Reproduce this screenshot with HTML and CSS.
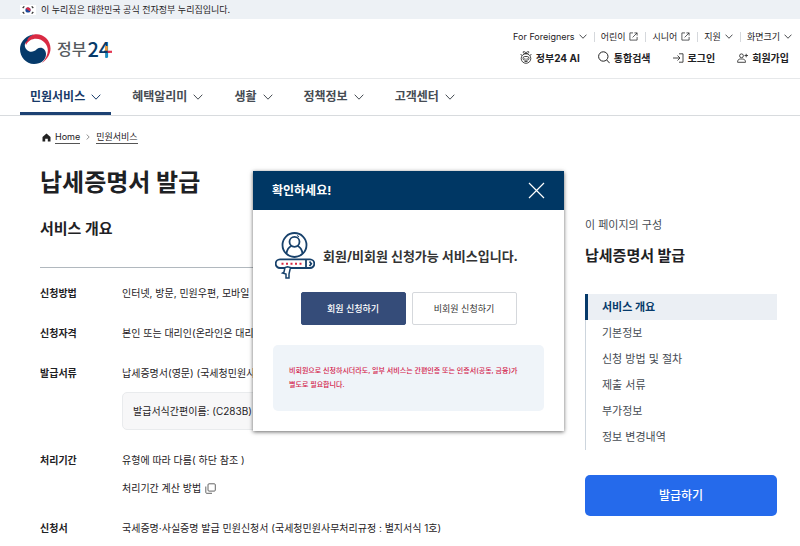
FILE: index.html
```
<!DOCTYPE html>
<html lang="ko">
  <head>
    <meta charset="utf-8" />
    <meta name="viewport" content="width=device-width" />
    <title>납세증명서 발급 | 정부24</title>
    <link rel="stylesheet" href="styles.css">
  </head>
  <body>
    <!-- shared icons -->
    <svg width="0" height="0" class="sprite" aria-hidden="true">
      <symbol id="chevron" viewBox="0 0 10 6">
        <path d="M.7.7 5 5.2 9.3.7" fill="none" stroke="currentColor" />
      </symbol>
      <symbol id="external" viewBox="0 0 10 10">
        <path d="M4.5 1H1v8h8V5.5M4 6l5-5M6 1h3v3" fill="none" stroke="currentColor" stroke-width=".8" />
      </symbol>
    </svg>

    <div class="banner">
      <svg class="flag" width="16" height="10" viewBox="0 0 16 10">
        <path fill="#fff" d="M0 0h16v10H0z" />
        <circle cx="8" cy="5" r="2.6" fill="#1b4a9c" />
        <path d="M5.6 4a2.6 2.6 0 0 1 4.9 1.7C9.700 6.500 8.600 5.700 8 5S6 4 5.600 4z" fill="#d92b45" />
        <path d="M2.700 3l1.600-1.600M11.700 1.400 13.300 3M2.700 7l1.600 1.600M11.700 8.600 13.300 7" stroke="#333" stroke-width="1.300" />
      </svg>
      <span>이 누리집은 대한민국 공식 전자정부 누리집입니다.</span>
    </div>

    <header class="header">
      <a href="#" class="logo">
        <svg width="31" height="30" viewBox="0 0 31 30">
          <path d="M5 8C9-1 20-2 26 4c7 7 6 18-4 25 6-7 8-14 3-20C20 3 10 3 6 11z" fill="#d92a43" />
          <path d="M12 .8C4 3 0 9 0 15c0 8 6 15 14 15 7 0 12-4 12-10 0-5-5-8-9-5-3 3-7 4-10 1C3 12 5 7 9 6 6 8 7 3 14 .6z" fill="#063a6a" />
        </svg>
        <span class="logo-name">정부</span><span class="logo-num">24
          <svg width="8" height="12" viewBox="0 0 8 12">
            <path d="M2.500 0v5" stroke="#f39a32" stroke-width="2.400" />
            <path d="M2.500 6.500V12" stroke="#1692c8" stroke-width="2.400" />
            <path d="M3.500 5.800H8" stroke="#e33652" stroke-width="2.200" />
            <path d="M0 5.800h3.500" stroke="#063a6a" stroke-width="2.200" />
          </svg>
        </span>
      </a>
      <div class="tools">
        <div class="util">
          <button>For Foreigners <svg width="8" height="5"><use href="#chevron" /></svg></button>
          <a href="#">어린이 <svg width="9" height="9"><use href="#external" /></svg></a>
          <a href="#">시니어 <svg width="9" height="9"><use href="#external" /></svg></a>
          <button>지원 <svg width="8" height="5"><use href="#chevron" /></svg></button>
          <button>화면크기 <svg width="8" height="5"><use href="#chevron" /></svg></button>
        </div>
        <div class="actions">
          <a href="#">
            <svg width="12" height="13" viewBox="0 0 12 13" fill="none" stroke="#333" stroke-width=".9">
              <circle cx="6" cy="7.500" r="4.800" />
              <rect x="3" y="5.500" width="6" height="3.600" rx="1.800" />
              <path d="M6 2.600C4 3 3 2 3.300.7 5 .5 6 1.200 6 2.600c0-1.400 1-2.100 2.700-1.900C9 2 8 3 6 2.600zM1.500 4.500.8 3M10.500 4.500l.7-1.500M4.800 7v.8M7.200 7v.8M4.500 10.500h3" />
            </svg>
            정부24 AI</a>
          <button>
            <svg width="12" height="13" viewBox="0 0 12 13" fill="none" stroke="#222">
              <circle cx="5.300" cy="5.500" r="4.700" />
              <path d="m8.700 9 3 3.200" />
            </svg>
            통합검색</button>
          <a href="#" class="wide">
            <svg width="11" height="10" viewBox="0 0 11 10" fill="none" stroke="#333" stroke-width=".9">
              <path d="M0 5h7M4.500 2.500 7 5 4.500 7.500M6 .8h4v8.400H6" />
            </svg>
            로그인</a>
          <a href="#" class="wide">
            <svg width="11" height="10" viewBox="0 0 11 10" fill="none" stroke="#333" stroke-width=".9">
              <circle cx="4.500" cy="2.800" r="1.900" />
              <path d="M.6 9.300C.6 5.700 3 6 4.500 6s4 0 4 3.300zM7.500 2.500h3.500M9.200.8v3.500" />
            </svg>
            회원가입</a>
        </div>
      </div>
    </header>

    <nav class="gnb">
      <button class="current">민원서비스 <svg width="10" height="6"><use href="#chevron" /></svg></button>
      <button>혜택알리미 <svg width="10" height="6"><use href="#chevron" /></svg></button>
      <button>생활 <svg width="10" height="6"><use href="#chevron" /></svg></button>
      <button>정책정보 <svg width="10" height="6"><use href="#chevron" /></svg></button>
      <button>고객센터 <svg width="10" height="6"><use href="#chevron" /></svg></button>
    </nav>

    <div class="container">
      <main>
        <div class="breadcrumb">
          <svg width="9" height="9" viewBox="0 0 9 9">
            <path d="M4.500.5.500 4v4.500h2.700V5.800h2.600v2.700h2.700V4z" fill="#222" />
          </svg>
          <a href="#">Home</a>
          <svg class="arrow" width="4" height="6" viewBox="0 0 4 6">
            <path d="m.6.5 2.600 2.500L.6 5.500" fill="none" stroke="#777" stroke-width=".8" />
          </svg>
          <a href="#">민원서비스</a>
        </div>
        <h1>납세증명서 발급</h1>
        <h2>서비스 개요</h2>
        <dl class="info">
          <dt>신청방법</dt>
          <dd>인터넷, 방문, 민원우편, 모바일</dd>
          <dt>신청자격</dt>
          <dd>본인 또는 대리인(온라인은 대리인 불가)</dd>
          <dt>발급서류</dt>
          <dd>
            납세증명서(영문) (국세청민원사무처리규정)
            <p class="form-name">발급서식간편이름: (C283B)</p>
          </dd>
          <dt>처리기간</dt>
          <dd>
            유형에 따라 다름( 하단 참조 )
            <a href="#" class="method">처리기간 계산 방법
              <svg width="11" height="11" viewBox="0 0 11 11" fill="none" stroke="#555" stroke-width=".9">
                <rect x="3" y=".8" width="7.300" height="7.300" rx="1" />
                <path d="M.8 3.500v6q0 .8.8.8H7" />
              </svg>
            </a>
          </dd>
          <dt>신청서</dt>
          <dd>국세증명·사실증명 발급 민원신청서 (국세청민원사무처리규정 : 별지서식 1호)</dd>
        </dl>
      </main>

      <aside class="side">
        <p>이 페이지의 구성</p>
        <h2>납세증명서 발급</h2>
        <ul>
          <li><a href="#" class="active">서비스 개요</a></li>
          <li><a href="#">기본정보</a></li>
          <li><a href="#">신청 방법 및 절차</a></li>
          <li><a href="#">제출 서류</a></li>
          <li><a href="#">부가정보</a></li>
          <li><a href="#">정보 변경내역</a></li>
        </ul>
        <button class="issue">발급하기</button>
      </aside>
    </div>

    <dialog open class="modal" aria-labelledby="modal-title">
      <div class="modal-head">
        <h2 id="modal-title">확인하세요!</h2>
        <button class="close" aria-label="닫기">
          <svg width="17" height="17" viewBox="0 0 17 17">
            <path d="m1 1 15 15M16 1 1 16" stroke="#fff" stroke-width="1.200" />
          </svg>
        </button>
      </div>
      <div class="modal-body">
        <div class="message">
          <svg width="40" height="47" viewBox="0 0 40 47" fill="none" stroke="#17416b" stroke-width="1.800">
            <circle cx="19.500" cy="13" r="12" />
            <circle cx="19.500" cy="9.800" r="5" />
            <path d="M11.500 21.500c.5-4 2.500-6.500 5-7.500M27.500 21.500c-.5-4-2.500-6.500-5-7.500" />
            <path d="M22 3.500l2 1.200" stroke-width="1" />
            <path d="M10 36H5a4.300 4.300 0 0 1 0-8.600h30a4.300 4.300 0 0 1 0 8.600H16M31 27.500V36M34.500 29.500l1.800 2.200-1.800 2.300" />
            <path d="M6.500 31.700h20" stroke="#d92a43" stroke-width="2" stroke-dasharray="2 2.500" />
            <path d="M10 35.500 9 40l-1.500 1 3.500 1v4h3v-4l1.500-6.500-3-.8z" stroke-width="1.500" />
          </svg>
          <strong>회원/비회원 신청가능 서비스입니다.</strong>
        </div>
        <div class="buttons">
          <button class="member">회원 신청하기</button>
          <button>비회원 신청하기</button>
        </div>
        <p class="notice">비회원으로 신청하시더라도, 일부 서비스는 간편인증 또는 인증서(공동, 금융)가 별도로 필요합니다.</p>
      </div>
    </dialog>
  </body>
</html>
```
FILE: styles.css
```
* {
  box-sizing: border-box;
}

body {
  margin: 0;
  background: #fff;
  color: #1e2124;
  font-family: Inter, "Noto Sans CJK KR", sans-serif;
  font-size: 11px;
  line-height: 20px;
}

h1, h2, p, ul, dl, dd {
  margin: 0;
  padding: 0;
}

a {
  color: inherit;
  text-decoration: none;
}

button {
  padding: 0;
  border: 0;
  background: none;
  color: inherit;
  font: inherit;
  cursor: pointer;
}

svg {
  flex: none;
}

.sprite {
  position: absolute;
}

/* top */
.banner {
  display: flex;
  align-items: center;
  gap: 5px;
  height: 19px;
  padding: 0 20px;
  background: #edf1f5;
  font-size: 9px;
}

.header {
  display: flex;
  justify-content: space-between;
  align-items: center;
  height: 60px;
  padding: 0 8px 0 20px;
  border-bottom: 1px solid #e6e8ea;
}

.logo {
  display: flex;
  align-items: center;
}

.logo-name {
  margin-left: 6px;
  color: #555a60;
  font-size: 16px;
  font-weight: 500;
}

.logo-num {
  position: relative;
  margin-left: 1px;
  color: #063a6a;
  font-family: "Noto Sans CJK KR", sans-serif;
  font-size: 20px;
  font-weight: 500;
}

.logo-num svg {
  position: absolute;
  right: -2px;
  top: 7px;
}

.tools {
  display: flex;
  flex-direction: column;
  align-items: flex-end;
  gap: 6px;
  padding-top: 2px;
}

.util,
.actions {
  display: flex;
  align-items: center;
}

.util {
  font-size: 9px;
  line-height: 10px;
}

.util > * {
  display: flex;
  align-items: center;
  gap: 4px;
  padding: 0 7px 0 6px;
  border-left: 1px solid #d5d8dc;
}

.util > :first-child {
  border-left: 0;
}

.util > :last-child {
  padding-right: 0;
}

.actions {
  gap: 18px;
  margin-right: 3px;
  font-size: 10px;
  font-weight: 700;
}

.actions > * {
  display: flex;
  align-items: center;
  gap: 4px;
}

.actions .wide {
  margin-left: 4px;
}

.gnb {
  display: flex;
  gap: 11px;
  height: 37px;
  padding: 0 20px;
  border-bottom: 1px solid #d8dbde;
  color: #464c53;
  font-size: 12px;
  font-weight: 700;
}

.gnb button {
  display: flex;
  align-items: center;
  gap: 6px;
  padding: 0 10px;
  border-bottom: 3px solid transparent;
  border-top: 3px solid transparent;
}

.gnb .current {
  border-bottom-color: #1d4273;
  color: #173a69;
}

/* content */
.container {
  display: grid;
  grid-template-columns: 1fr 192px;
  gap: 36px;
  padding: 13px 23px 8px 40px;
}

.breadcrumb {
  display: flex;
  align-items: center;
  gap: 4px;
  height: 16px;
  padding-left: 2px;
  font-size: 9px;
  line-height: 12px;
}

.breadcrumb a {
  border-bottom: 1px solid #555;
}

.breadcrumb .arrow {
  margin: 0 2px;
}

h1 {
  margin-top: 20px;
  font-size: 24px;
  line-height: 36px;
}

h2 {
  font-size: 15px;
  line-height: 24px;
}

main h2 {
  margin-top: 16px;
}

.info {
  display: grid;
  grid-template-columns: 82px 1fr;
  row-gap: 20px;
  margin-top: 26px;
  padding-top: 15px;
  border-top: 1px solid #b1b8be;
  font-size: 10px;
}

.info dt {
  font-weight: 700;
}

.form-name {
  margin-top: 9px;
  padding: 8px 10px;
  border: 1px solid #e9ebed;
  border-radius: 5px;
  background: #f7f7f8;
}

.method {
  display: flex;
  align-items: center;
  gap: 4px;
  margin-top: 8px;
}

.side {
  padding-top: 86px;
  color: #464c53;
}

.side h2 {
  margin-top: 9px;
  color: #1e2124;
}

.side ul {
  margin: 26px 0 25px;
  list-style: none;
}

.side li a {
  display: block;
  padding: 3px 16px;
  border-left: 1px solid #cdd5dd;
}

.side li .active {
  padding-left: 14px;
  border-left: 3px solid #063a6a;
  background: #ebeff4;
  color: #063a6a;
  font-weight: 700;
}

.issue {
  width: 100%;
  height: 41px;
  border-radius: 5px;
  background: #256aeb;
  color: #fff;
  font-size: 12px;
  font-weight: 500;
}

/* popup */
.modal {
  position: absolute;
  top: 171px;
  left: 253px;
  width: 311px;
  margin: 0;
  padding: 0;
  border: 0;
  background: #fff;
  color: #333;
  box-shadow: 0 1px 4px rgba(0, 0, 0, 0.6);
}

.modal-head {
  display: flex;
  justify-content: space-between;
  align-items: center;
  height: 39px;
  padding: 0 19px;
  background: #003764;
  color: #fff;
}

.modal-head h2 {
  font-size: 12px;
}

.close {
  display: flex;
}

.modal-body {
  padding: 22px 20px 20px;
}

.message {
  display: flex;
  align-items: center;
  gap: 8px;
  padding-left: 2px;
  font-size: 13px;
}

.buttons {
  display: flex;
  justify-content: center;
  gap: 6px;
  margin: 13px 0 20px;
}

.buttons button {
  width: 105px;
  height: 33px;
  border: 1px solid #d5d8dc;
  border-radius: 2px;
  font-size: 9px;
}

.buttons .member {
  border-color: #354c79;
  background: #354c79;
  color: #fff;
  font-weight: 500;
}

.notice {
  padding: 19px 16px;
  border-radius: 5px;
  background: #eff4f9;
  color: #d3204a;
  font-size: 7px;
  font-weight: 500;
  line-height: 14px;
  word-break: keep-all;
}
```
